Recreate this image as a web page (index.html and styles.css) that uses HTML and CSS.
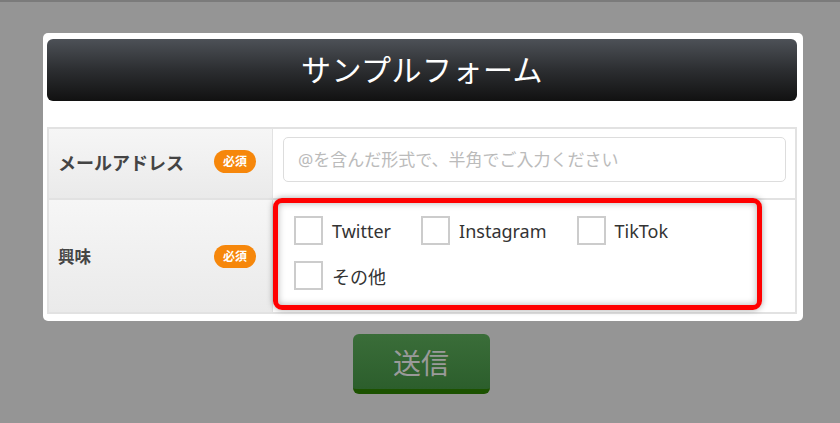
FILE: index.html
```html
<!DOCTYPE html>
<html lang="ja">
<head>
  <meta charset="UTF-8" />
  <title>サンプルフォーム</title>
  <link rel="stylesheet" href="styles.css">
</head>
<body>

  <!-- Form card -->
  <section class="card">
    <h1 class="card-title">サンプルフォーム</h1>

    <div class="form-table">
      <div class="form-row row-mail">
        <div class="form-label">
          <span>メールアドレス</span>
          <span class="badge">必須</span>
        </div>
        <div class="form-field">
          <input type="text" class="text-input" placeholder="@を含んだ形式で、半角でご入力ください" />
        </div>
      </div>

      <div class="form-row row-interest">
        <div class="form-label">
          <span class="label-small">興味</span>
          <span class="badge">必須</span>
        </div>
        <div class="form-field field-checks">
          <div class="highlight">
            <label class="check"><span class="box"></span>Twitter</label>
            <label class="check"><span class="box"></span>Instagram</label>
            <label class="check"><span class="box"></span>TikTok</label>
            <label class="check"><span class="box"></span>その他</label>
          </div>
        </div>
      </div>
    </div>
  </section>

  <div class="actions">
    <button class="submit" type="button">送信</button>
  </div>

</body>
</html>
```

FILE: styles.css
```css
/* Reset and base */
* {
  margin: 0;
  padding: 0;
  box-sizing: border-box;
  font-family: 'Noto Sans', 'Noto Sans CJK JP', sans-serif;
}

body {
  background: #959595;
  border-top: 2px solid #7b7b7b;
  height: 423px;
  overflow: hidden;
}

/* Card */
.card {
  width: 760px;
  margin: 31px 0 0 43px;
  background: #fff;
  border-radius: 5px;
  padding: 6px 6px 7px 4px;
}

.card-title {
  height: 62px;
  border-radius: 6px;
  background: linear-gradient(180deg, #4d5157 0%, #2c2e31 50%, #111 100%);
  color: #fff;
  font-weight: 400;
  font-size: 30px;
  line-height: 62px;
  text-align: center;
  letter-spacing: 0.5px;
}

/* Table */
.form-table {
  margin-top: 26px;
  border: 2px solid #e2e2e2;
}

.form-row {
  display: grid;
  grid-template-columns: 224px 1fr;
}

.form-row + .form-row {
  border-top: 2px solid #e2e2e2;
}

.row-mail { height: 69px; }
.row-interest { height: 114px; }

.form-label {
  display: flex;
  align-items: center;
  justify-content: space-between;
  padding: 0 16px 0 9px;
  background: linear-gradient(180deg, #f6f6f6, #eaeaea);
  border-right: 1px solid #e2e2e2;
  color: #444;
  font-weight: 700;
  font-size: 18px;
}

.row-mail .form-label {
  padding-bottom: 4px;
}

.label-small {
  font-size: 16.5px;
}

.badge {
  display: inline-block;
  width: 42px;
  height: 23px;
  line-height: 23px;
  border-radius: 12px;
  background: #f6870b;
  color: #fff;
  font-size: 12px;
  font-weight: 700;
  text-align: center;
}

.form-field {
  display: flex;
  align-items: flex-start;
  padding: 8px 9px 0 10px;
}

.text-input {
  width: 100%;
  height: 45px;
  border: 1px solid #ddd;
  border-radius: 5px;
  padding: 0 14px;
  font-size: 17px;
  color: #333;
  outline: none;
}

.text-input::placeholder {
  color: #bbb;
}

/* Checkbox cell with red highlight */
.field-checks {
  padding: 0;
}

.highlight {
  width: 489px;
  height: 112px;
  margin-top: -2px;
  border: 5px solid #ff0000;
  border-radius: 9px;
  box-shadow: 0 0 6px rgba(0,0,0,0.35), inset 0 0 7px rgba(0,0,0,0.3);
  padding: 13px 0 0 16px;
  display: flex;
  flex-wrap: wrap;
  align-content: flex-start;
  column-gap: 30px;
  row-gap: 16px;
}

.check {
  display: flex;
  align-items: center;
  gap: 9px;
  height: 29px;
  font-size: 18px;
  color: #333;
}

.box {
  width: 29px;
  height: 29px;
  border: 2px solid #ccc;
  background: #fff;
}

/* Submit */
.actions {
  display: flex;
  justify-content: center;
  padding: 13px 0 0 2px;
}

.submit {
  width: 137px;
  height: 60px;
  border: none;
  border-bottom: 5px solid #1c5200;
  border-radius: 6px;
  background: linear-gradient(180deg, #3a6d39, #2c5e2c);
  color: #9a9a9a;
  font-size: 28px;
  cursor: pointer;
}
```
